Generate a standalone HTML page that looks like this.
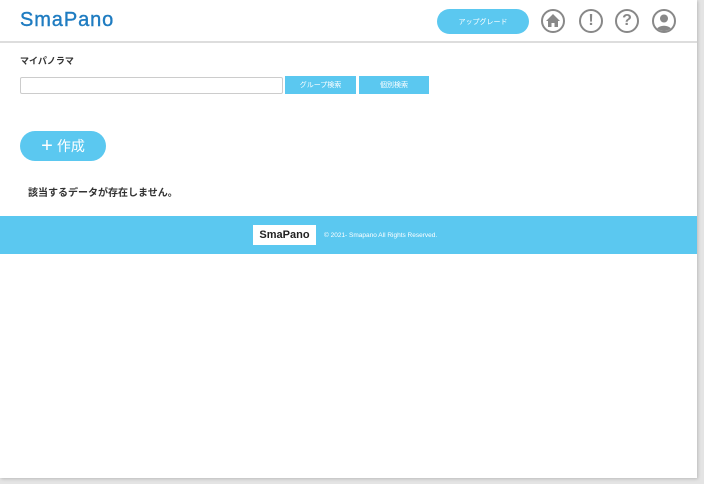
<!DOCTYPE html>
<html><head><meta charset="utf-8"><style>
*{margin:0;padding:0;box-sizing:border-box}
body{width:704px;height:484px;background:#e4e4e4;position:relative;overflow:hidden;font-family:"Liberation Sans","Noto Sans CJK JP",sans-serif}
#page{position:absolute;left:0;top:0;width:697px;height:478px;background:#fff;box-shadow:1px 1px 3px #bbb}
.abs{position:absolute}
.fc{display:flex;align-items:center;justify-content:center}
.logo{left:20px;top:9px;font-size:20px;color:#1f7cc1;font-family:"Liberation Sans",sans-serif;letter-spacing:0.9px;-webkit-text-stroke:0.4px #1f7cc1}
.hdrline{left:0;top:41px;width:697px;height:2px;background:#ddd}
.up{left:437px;top:9px;width:92px;height:25px;border-radius:13px;background:#5bc8f0;color:#fff;font-size:7px}
.ic{top:9px;width:24px;height:24px;border:2px solid #888;border-radius:50%;color:#888;font-weight:bold;font-size:16px;overflow:hidden}
.t1{left:20px;top:54px;font-size:9px;font-weight:bold;color:#333}
.inp{left:20px;top:77px;width:263px;height:17px;border:1px solid #ccc;border-radius:2px}
.btn{top:76px;height:18px;background:#5bc8f0;color:#fff;font-size:7px}
.cr{left:20px;top:131px;width:86px;height:30px;border-radius:15px;background:#5bc8f0;color:#fff;font-size:14px}
.msg{left:28px;top:184px;font-size:10px;font-weight:bold;color:#333}
.ft{left:0;top:216px;width:697px;height:38px;background:#5bc8f0}
.fl{left:253px;top:225px;width:63px;height:20px;background:#fff;font-size:11px;font-weight:bold;color:#222}
.cp{left:324px;top:228px;height:14px;font-size:6.5px;color:#fff}
</style></head><body><div id="page">
<div class="abs logo">SmaPano</div>
<div class="abs hdrline"></div>
<div class="abs up fc">アップグレード</div>
<div class="abs ic fc" style="left:541px"><svg width="20" height="20" viewBox="0 0 20 20"><path d="M10 3 L17 10 H15 V16 H11.5 V12 H8.5 V16 H5 V10 H3 Z" fill="#888"/></svg></div>
<div class="abs ic fc" style="left:579px">!</div>
<div class="abs ic fc" style="left:615px">?</div>
<div class="abs ic fc" style="left:652px"><svg width="20" height="20" viewBox="0 0 20 20"><circle cx="10" cy="7.5" r="4" fill="#888"/><path d="M2 20 C3 13 17 13 18 20Z" fill="#888"/></svg></div>
<div class="abs t1">マイパノラマ</div>
<div class="abs inp"></div>
<div class="abs btn fc" style="left:285px;width:71px">グループ検索</div>
<div class="abs btn fc" style="left:359px;width:70px">個別検索</div>
<div class="abs cr fc"><span style="font-size:20px;margin-right:4px">+</span>作成</div>
<div class="abs msg">該当するデータが存在しません。</div>
<div class="abs ft"></div>
<div class="abs fl fc">SmaPano</div>
<div class="abs cp fc">© 2021- Smapano All Rights Reserved.</div>
</div></body></html>
